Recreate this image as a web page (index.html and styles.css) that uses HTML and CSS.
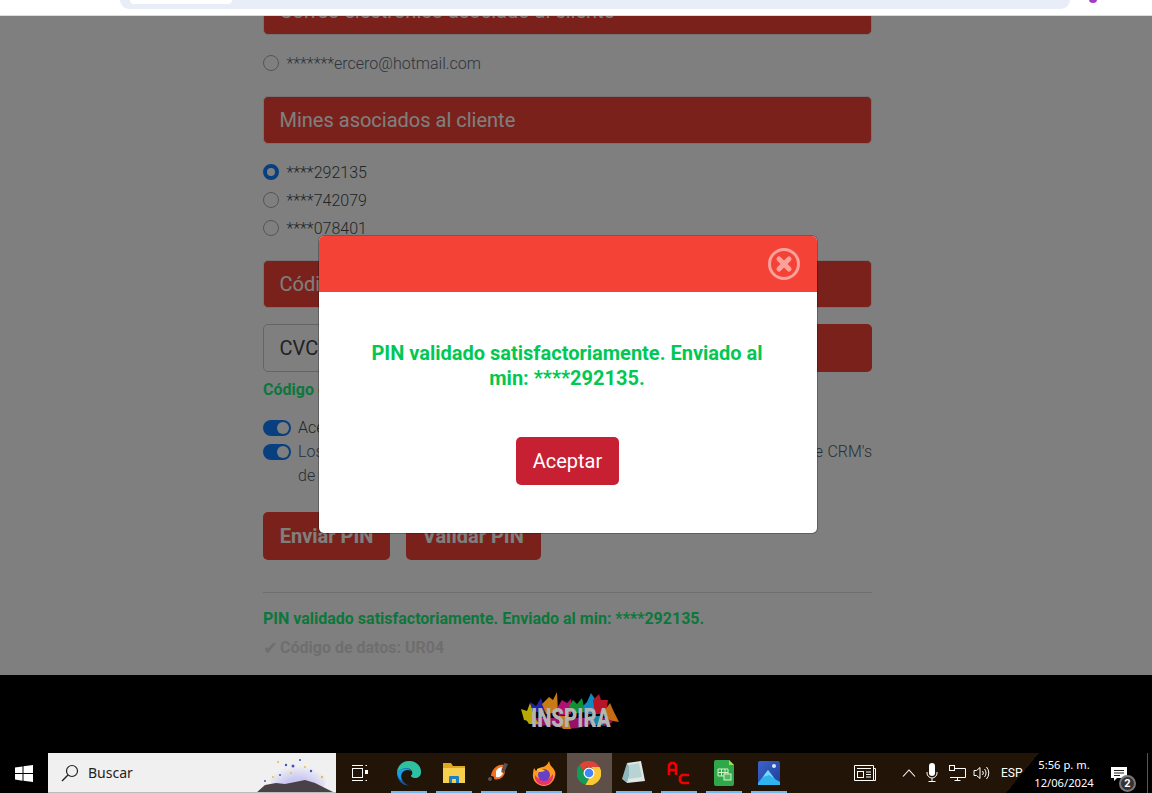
FILE: index.html
```html
<!DOCTYPE html>
<html lang="es">
<head>
  <meta charset="UTF-8">
  <title>Validar PIN</title>
  <link rel="stylesheet" href="styles.css">
</head>
<body>
<div class="browser-bar">
  <div class="address-pill"><span class="address-tab"></span></div>
  <span class="profile-dot"></span>
</div>

<div class="viewport">
  <main>
    <div class="content">
      <div class="title-bar">Correo electrónico asociado al cliente</div>
      <label class="radio-row email-row"><span class="radio"></span>*******ercero@hotmail.com</label>

      <div class="title-bar">Mines asociados al cliente</div>
      <div class="radio-list">
        <label class="radio-row"><span class="radio checked"></span>****292135</label>
        <label class="radio-row"><span class="radio"></span>****742079</label>
        <label class="radio-row"><span class="radio"></span>****078401</label>
      </div>

      <div class="title-bar">Código de validación</div>
      <div class="input-group">
        <div class="input-box">CVC</div>
        <div class="input-btn">Validar</div>
      </div>
      <p class="ok-text">Código enviado correctamente.</p>

      <div class="switch-row">
        <span class="switch"></span>
        <span>Acepto los términos y condiciones</span>
      </div>
      <div class="switch-row">
        <span class="switch"></span>
        <span class="switch-long">Los datos personales serán tratados conforme a la política y el sistema de CRM's de la compañía</span>
      </div>

      <div class="actions">
        <button class="btn-red">Enviar PIN</button>
        <button class="btn-red">Validar PIN</button>
      </div>
      <hr class="rule">
      <p class="ok-text">PIN validado satisfactoriamente. Enviado al min: ****292135.</p>
      <p class="data-code"><span class="check">✔</span>Código de datos: UR04</p>
    </div>
  </main>

  <footer></footer>

  <div class="overlay"></div>

  <div class="logo">
    <svg width="100" height="40" viewBox="0 0 100 40">
      <polygon points="0,17 6,19 9,11 11,16 14,30 3,28" fill="#b8a800"/>
      <polygon points="9,10 15,14 20,6 24,20 12,20" fill="#2424a8"/>
      <polygon points="21,12 28,5 32,8 36,0 37,20 25,22" fill="#c87a14"/>
      <polygon points="36,16 41,8 46,11 50,7 50,22 38,24" fill="#b01070"/>
      <polygon points="48,14 52,8 56,12 61,6 64,20 52,22" fill="#109030"/>
      <polygon points="62,14 66,10 70,1 74,7 74,22 64,22" fill="#1088c0"/>
      <polygon points="72,8 78,2 80,8 87,8 85,22 74,22" fill="#b81428"/>
      <polygon points="84,18 89,11 92,18 98,30 86,28" fill="#c86a14"/>
      <polygon points="14,26 86,26 92,30 84,34 70,32 58,36 44,37 30,33 18,34 8,30" fill="#98106a"/>
      <polygon points="36,24 46,24 50,37 42,37" fill="#c87a14"/>
      <polygon points="68,24 80,24 82,33 70,33" fill="#1088a8"/>
      <polygon points="4,26 14,26 18,32 8,32" fill="#b8a800"/>
    </svg>
    <span class="logo-text">INSPIRA</span>
  </div>

  <div class="modal">
    <div class="modal-head">
      <svg class="modal-close" width="34" height="34" viewBox="0 0 34 34">
        <circle cx="17" cy="17" r="14.500" fill="none" stroke="#fff" stroke-opacity=".5" stroke-width="3"/>
        <path d="M12 12l10 10M22 12L12 22" stroke="#fff" stroke-opacity=".5" stroke-width="5" stroke-linecap="round"/>
      </svg>
    </div>
    <div class="modal-body">
      <p class="modal-msg">PIN validado satisfactoriamente. Enviado al min: ****292135.</p>
      <button class="btn-accept">Aceptar</button>
    </div>
  </div>
</div>

<div class="taskbar">
  <div class="start">
    <svg width="18" height="17" viewBox="0 0 18 17"><path fill="#fff" d="M0 2.500l7.500-1.100v6.700H0zM8.500 1.200L18 0v8.100H8.500zM0 9h7.500v6.700L0 14.500zM8.500 9H18v8l-9.500-1.300z"/></svg>
  </div>
  <div class="search">
    <svg width="18" height="18" viewBox="0 0 18 18"><circle cx="11" cy="7" r="5.500" fill="none" stroke="#222" stroke-width="1.200"/><path d="M7 11l-6 6" stroke="#222" stroke-width="1.400"/></svg>
    <span class="search-label">Buscar</span>
    <svg class="search-art" width="80" height="40" viewBox="0 0 80 40">
      <defs><radialGradient id="glow" cx=".5" cy=".8" r=".6"><stop offset="0" stop-color="#e6e2a8"/><stop offset=".5" stop-color="#c9c6f4"/><stop offset="1" stop-color="#f0f0f0"/></radialGradient></defs>
      <ellipse cx="42" cy="26" rx="28" ry="22" fill="url(#glow)"/>
      <g fill="#3a55c0"><circle cx="30" cy="12" r="1.200"/><circle cx="37" cy="13" r="1.500"/><circle cx="55" cy="18" r="1.200"/><circle cx="24" cy="22" r="1"/><circle cx="9" cy="28" r="1"/><circle cx="44" cy="7" r="1"/></g>
      <g fill="#e0c040"><circle cx="22" cy="9" r="1"/><circle cx="66" cy="24" r="1.200"/><circle cx="17" cy="24" r="1"/><circle cx="35" cy="20" r="1"/><circle cx="49" cy="14" r="1"/></g>
      <path fill="#4a4048" d="M0 40l9-8 11-2 9 1 10-2 10-2 10 3 20 10z"/>
    </svg>
  </div>
  <div class="task-btn task-view">
    <svg width="18" height="18" viewBox="0 0 18 18" fill="none" stroke="#fff"><rect x="1.500" y="4.500" width="10" height="9"/><path d="M1 1.500h11M1 16.500h11M14.500 1.500h1.500M14.500 16.500h1.500"/><rect x="14.500" y="6.500" width="2" height="3" fill="#fff"/></svg>
  </div>
  <div class="task-btn open">
    <svg width="26" height="26" viewBox="0 0 26 26">
      <path fill="#0c59a4" d="M1 13C1 6 6.500 1 13 1c7 0 12 5 12 11 0 4-3 6-6 6-2 0-4-1-4-2.500 2-1 2-6-3-6.500-5 0-8 5-6 10 1 3 4 6 8 6.500C7 26 1 21 1 13z"/>
      <path fill="#2fc0a0" d="M1 12C2 5 7 1 13 1c7 0 12 5 12 11 0 4-3 6-6 6-2 0-4-1-4-2.500 3-2 1-7-4-7.500-4 0-8 2-10 4z"/>
      <path fill="#1b9de2" d="M1 12c2-2 6-4 10-3.500 2 .3 3.500 1.300 4 2.500-3-2-7-1-9 2-1.500 2-1.500 5 0 8-3-2-5-5-5-9z"/>
    </svg>
  </div>
  <div class="task-btn open">
    <svg width="24" height="22" viewBox="0 0 24 22">
      <path fill="#e0a81c" d="M1 1h8l2 3h12v4H1z"/><rect x="1" y="6" width="22" height="15" fill="#f6cf4e"/>
      <path fill="#1f7fc4" d="M7 21v-6a1 1 0 011-1h8a1 1 0 011 1v6h-3v-4h-4v4z"/>
    </svg>
  </div>
  <div class="task-btn open">
    <svg width="24" height="24" viewBox="0 0 24 24">
      <path fill="#f07020" d="M6 9c3-5 8-6 11-5l-2 5 3 1c0 6-6 10-11 8 1-2-1-3-3-3 0-2 1-4 2-6z"/>
      <path fill="#fff" d="M9 10c2-3 4-4 6-4l-1 5 2 1c-1 3-4 5-7 4 0-2 0-4 0-6z"/>
      <path fill="#555" d="M17 2l4 1-4 9-2-1zM1 18a2 2 0 104 0 2 2 0 10-4 0z"/>
    </svg>
  </div>
  <div class="task-btn open">
    <svg width="24" height="26" viewBox="0 0 24 26">
      <path fill="#ff9a1f" d="M2 8l2 3c2-3 5-4 7-4 3-1 5-3 6-6 1 3 1 4 3 6 3 3 4 6 3 9-1 6-6 10-11 10C5 26 0 20 1 14c0-2 .5-4 1-6z"/>
      <path fill="#e8336c" d="M12 25C6 25 2 20 3 15c2 3 5 5 9 5s7-3 9-6c1 6-3 11-9 11z"/>
      <circle cx="12" cy="15" r="6" fill="#6a3fc8"/>
      <path fill="#ffc03a" d="M5 9c3-1 6 0 8 2l-5 1c-2 0-3-1-3-3z"/>
    </svg>
  </div>
  <div class="task-btn active">
    <svg width="24" height="24" viewBox="0 0 24 24">
      <path fill="#db4437" d="M12 0a12 12 0 0110.400 6H12a6 6 0 00-5.700 4L2.500 4A12 12 0 0112 0z"/>
      <path fill="#0f9d58" d="M2.500 4l5.200 9a5 5 0 004.300 5l-3.500 5.700A12 12 0 012.500 4z"/>
      <path fill="#fcc934" d="M22.400 6A12 12 0 018.500 23.700L13.500 15a5 5 0 00.500-9z"/>
      <circle cx="12" cy="12" r="5.500" fill="#fff"/><circle cx="12" cy="12" r="4.300" fill="#4285f4"/>
    </svg>
  </div>
  <div class="task-btn open">
    <svg width="24" height="26" viewBox="0 0 24 26">
      <path fill="#dfe8e6" d="M5 3l14-2 4 20-18 2z"/>
      <path fill="#8fb6bc" d="M5 3L0 19l5 4 4-14z"/>
      <path fill="#b7d3d4" d="M7 5l10-2 3 14-13 2z"/>
    </svg>
  </div>
  <div class="task-btn open">
    <svg width="24" height="24" viewBox="0 0 24 24" fill="none" stroke="#f00000" stroke-width="2.600">
      <path d="M2 14V4l2-2h3l2 2v10M2 9h7"/><path d="M22 14h-7l-2 2v4l2 2h7"/>
    </svg>
  </div>
  <div class="task-btn open">
    <svg width="20" height="26" viewBox="0 0 20 26">
      <path fill="#2fa84a" d="M2 0h13l5 5v19a2 2 0 01-2 2H2a2 2 0 01-2-2V2a2 2 0 012-2z"/>
      <path fill="#9be24e" d="M15 0l5 5h-5z"/>
      <path fill="none" stroke="#d8f0c8" d="M4 9h10v7H4zM7.500 9v7M11 9v7M4 12.500h10"/>
      <rect x="10" y="14" width="7" height="6" fill="#4dbb62" stroke="#d8f0c8"/>
    </svg>
  </div>
  <div class="task-btn open">
    <svg width="22" height="24" viewBox="0 0 22 24">
      <defs><linearGradient id="sky" x1="0" y1="0" x2="1" y2="1"><stop offset="0" stop-color="#3b63c8"/><stop offset="1" stop-color="#1e3f9c"/></linearGradient></defs>
      <rect width="22" height="24" rx="2" fill="url(#sky)"/>
      <circle cx="16" cy="5" r="2" fill="#d8e4f8"/>
      <path fill="#2fb4f0" d="M0 22l10-13 7 9 5 3v3H0z"/>
      <path fill="#7ad8f8" d="M5 16l5-7 6 8-5-3z"/>
    </svg>
  </div>

  <div class="tray">
    <svg class="tray-news" width="24" height="18" viewBox="0 0 24 18" fill="none" stroke="#fff"><path d="M1.500 1.500h19v15h-19zM20.500 4.500h2v12h-2"/><path d="M4 4.500h14"/><rect x="4.500" y="7.500" width="6" height="6"/><path d="M13 8h5M13 10.500h5M13 13h5"/></svg>
    <svg class="tray-chevron" width="14" height="8" viewBox="0 0 14 8" fill="none" stroke="#fff" stroke-width="1.100"><path d="M1 7.500L7 1l6 6.500"/></svg>
    <svg class="tray-mic" width="12" height="20" viewBox="0 0 12 20"><rect x="3" y="0" width="6" height="13" rx="3" fill="#fff"/><path d="M1 9v1a5 5 0 0010 0V9M6 15v3M2.500 18.500h7" fill="none" stroke="#fff"/></svg>
    <svg class="tray-net" width="17" height="16" viewBox="0 0 17 16" fill="none" stroke="#fff"><path d="M4 3.500h12.500v9H1M8.500 12.500V15M5.500 15.500h6"/><rect x=".5" y=".5" width="5" height="5" fill="#231408"/></svg>
    <svg class="tray-vol" width="17" height="14" viewBox="0 0 17 14" fill="none" stroke="#fff"><path d="M1 4.500h2.500L7 1.500v11l-3.500-3H1z"/><path d="M9.500 5a3 3 0 010 4M11.500 3a6 6 0 010 8M13.500 1a9 9 0 010 12"/></svg>
    <span class="tray-lang">ESP</span>
  </div>
  <div class="clock-wedge"></div>
  <div class="clock">
    <span>5:56 p. m.</span>
    <span>12/06/2024</span>
  </div>
  <div class="notif">
    <svg width="16" height="15" viewBox="0 0 16 15"><path fill="#fff" d="M0 0h16v11H6l-3 3v-3H0z"/><path d="M3 3.500h10M3 6h10M3 8.500h6" stroke="#222"/></svg>
    <span class="notif-badge">2</span>
  </div>
  <div class="show-desktop"></div>
</div>
</body>
</html>
```

FILE: styles.css
```css
* { box-sizing: border-box; margin: 0; padding: 0; }
html, body { height: 100%; }
body {
  height: 793px;
  display: flex;
  flex-direction: column;
  overflow: hidden;
  font-family: Roboto, "Liberation Sans", sans-serif;
  background: #fff;
}
.browser-bar {
  height: 16px;
  flex: none;
  background: #fff;
  border-bottom: 1px solid #dcdcdc;
  position: relative;
}
.address-pill {
  width: 950px;
  height: 9px;
  margin-left: 120px;
  background: #e9edf8;
  border-radius: 0 0 12px 12px;
}
.address-tab {
  display: block;
  width: 102px;
  height: 4px;
  margin-left: 10px;
  background: #fff;
  border-radius: 0 0 6px 6px;
}
.profile-dot {
  position: absolute;
  left: 1089px;
  top: -4px;
  width: 8px;
  height: 7px;
  border-radius: 50%;
  background: #a63ac8;
}

.viewport {
  flex: 1;
  position: relative;
  overflow: hidden;
  display: flex;
  flex-direction: column;
}
main {
  flex: 1;
  width: 1135px;
  background: #fff;
  overflow: hidden;
}
.content {
  width: 609px;
  margin: -29px auto 0;
  color: #454a4e;
  font-weight: 300;
  font-size: 16px;
}
.title-bar {
  height: 48px;
  padding: 0 15.500px;
  display: flex;
  align-items: center;
  background: #f44336;
  border: 1px solid #e8e8e8;
  border-radius: 5px;
  color: #fff;
  font-size: 20px;
  font-weight: 400;
}
.radio-row {
  height: 28px;
  display: flex;
  align-items: center;
  gap: 7.500px;
}
.email-row { margin: 14px 0 19px; color: #5a6a7a; }
.radio-list { margin: 14px 0 18px; }
.radio {
  width: 16px;
  height: 16px;
  border-radius: 50%;
  background: #fff;
  border: 1px solid #aaa;
}
.radio.checked { border: 4px solid #1080ff; }
.input-group {
  height: 48px;
  margin-top: 16px;
  display: flex;
}
.input-box {
  flex: 1;
  padding: 0 15.500px;
  display: flex;
  align-items: center;
  border: 1px solid #c4c8cc;
  border-radius: 5px 0 0 5px;
  font-size: 20px;
  font-weight: 400;
  color: #444;
}
.input-btn {
  width: 180px;
  background: #f44336;
  border-radius: 0 5px 5px 0;
  color: #fff;
}
.ok-text {
  height: 24px;
  line-height: 24px;
  margin-top: 6px;
  font-size: 16px;
  font-weight: 700;
  color: #18ee78;
  white-space: nowrap;
}
.switch-row {
  display: flex;
  gap: 7px;
  line-height: 24px;
}
.ok-text + .switch-row { margin-top: 14px; }
.switch {
  flex: none;
  width: 28px;
  height: 16px;
  margin-top: 4px;
  padding: 2px 2px 2px 14px;
  border-radius: 8px;
  background: #1080ff;
}
.switch::after {
  content: "";
  display: block;
  width: 12px;
  height: 12px;
  border-radius: 50%;
  background: #fff;
}
.switch-long { text-align: justify; color: #50606e; }
.actions {
  display: flex;
  gap: 16px;
  margin-top: 24px;
}
.btn-red {
  height: 48px;
  padding: 0 16.700px;
  background: #f44336;
  border: 0;
  border-radius: 5px;
  color: #fff;
  font-family: inherit;
  font-size: 20px;
  font-weight: 700;
}
.rule {
  margin: 32px 0 14px;
  border: 0;
  border-top: 1px solid #dcdcdc;
}
.data-code {
  margin-top: 5px;
  line-height: 24px;
  font-weight: 700;
  color: #dcdcdc;
}
.check {
  display: inline-block;
  width: 17px;
  font-family: "DejaVu Sans", sans-serif;
  font-size: 18px;
  line-height: 20px;
  vertical-align: top;
  margin-top: 2px;
}

footer {
  height: 78px;
  flex: none;
  background: #000;
}
.logo {
  position: absolute;
  left: 521px;
  bottom: 21px;
  width: 100px;
  height: 40px;
}
.logo-text {
  position: absolute;
  left: 10px;
  top: 14px;
  font-size: 26px;
  line-height: 24px;
  font-weight: 900;
  color: #b4b4b4;
  transform: scaleX(.78);
  transform-origin: left center;
}

.overlay {
  position: absolute;
  inset: 0;
  background: rgba(0, 0, 0, .5);
}
.modal {
  position: absolute;
  left: 319px;
  top: 220px;
  width: 498px;
  height: 297px;
  background: #fff;
  border-radius: 5px;
  overflow: hidden;
  box-shadow: 0 0 0 1px rgba(0, 0, 0, .25);
}
.modal-head {
  height: 56px;
  padding-right: 16px;
  background: #f44336;
  display: flex;
  align-items: center;
  justify-content: flex-end;
}
.modal-body {
  padding: 49px 49px 0 47px;
  text-align: center;
}
.modal-msg {
  font-size: 20px;
  line-height: 25px;
  font-weight: 700;
  color: #00c853;
}
.btn-accept {
  margin-top: 46px;
  width: 103px;
  height: 48px;
  padding-left: 1px;
  background: #c82033;
  border: 0;
  border-radius: 5px;
  color: #fff;
  font-family: inherit;
  font-size: 20px;
}

.taskbar {
  height: 40px;
  flex: none;
  display: flex;
  align-items: stretch;
  background: #231408;
}
.start {
  width: 48px;
  background: #000;
  display: flex;
  align-items: center;
  justify-content: center;
}
.search {
  width: 288px;
  position: relative;
  display: flex;
  align-items: center;
  gap: 9px;
  padding-left: 13px;
  background: #f0f0f0;
  border-bottom: 1px solid #bbb;
  overflow: hidden;
}
.search-label {
  font-family: "Noto Sans", sans-serif;
  font-size: 14px;
  color: #222;
}
.search-art {
  position: absolute;
  right: 0;
  top: 0;
}
.task-btn {
  width: 45px;
  flex: none;
  padding-right: 1px;
  display: flex;
  align-items: center;
  justify-content: center;
  position: relative;
}
.task-btn.task-view { width: 51px; padding-right: 3px; }
.task-btn.open::after {
  content: "";
  position: absolute;
  left: 4px;
  right: 5px;
  bottom: 0;
  height: 2px;
  background: #76b9ed;
}
.task-btn.active { background: #5e5048; }
.tray {
  width: 214px;
  flex: none;
  padding-left: 61px;
  display: flex;
  align-items: center;
  background: #231408;
}
.tray svg { flex: none; }
.tray-chevron { margin-left: 25px; }
.tray-mic { margin-left: 10px; }
.tray-net { margin-left: 11px; }
.tray-vol { margin-left: 7px; }
.tray-lang {
  position: relative;
  z-index: 1;
  margin-left: 11px;
  font-size: 12px;
  font-family: Roboto, sans-serif;
  color: #fff;
}
.clock-wedge {
  width: 33px;
  flex: none;
  background: linear-gradient(to top left, #000 50%, #231408 50%);
}
.clock {
  width: 50px;
  flex: none;
  background: #000;
  display: flex;
  flex-direction: column;
  align-items: center;
  justify-content: center;
  gap: 3px;
  font-family: "Noto Sans", sans-serif;
  font-size: 11.200px;
  line-height: 15px;
  white-space: nowrap;
  color: #fff;
}
.clock span { position: relative; z-index: 1; }
.notif {
  flex: 1;
  position: relative;
  display: flex;
  padding: 14px 0 0 22px;
  background: #000;
}
.notif-badge {
  position: absolute;
  left: 30px;
  top: 22px;
  width: 17px;
  height: 17px;
  border-radius: 50%;
  border: 2px solid #777;
  background: #333;
  color: #fff;
  font-size: 11px;
  font-weight: 700;
  line-height: 13px;
  text-align: center;
}
.show-desktop {
  width: 5px;
  flex: none;
  background: #000;
  border-left: 1px solid #555;
}
```
